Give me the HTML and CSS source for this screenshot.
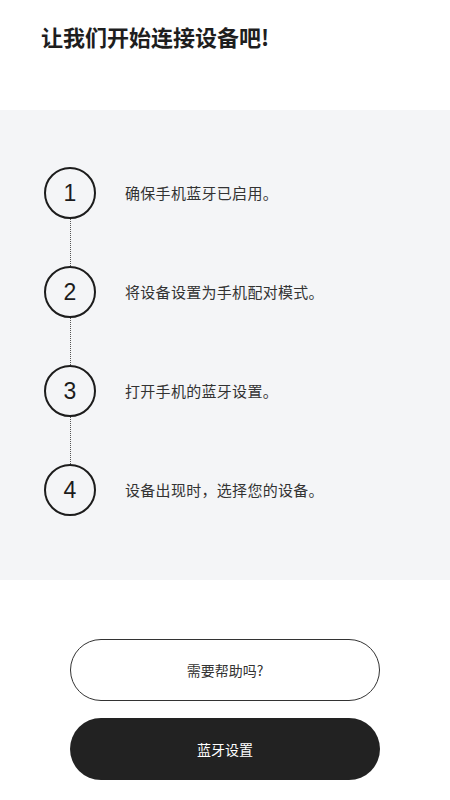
FILE: index.html
```html
<!DOCTYPE html>
<html lang="zh">
<head>
<meta charset="utf-8">
<link rel="stylesheet" href="styles.css">
</head>
<body>
<header class="header">
  <h1 class="title">让我们开始连接设备吧!</h1>
</header>
<section class="panel">
  <div class="step">
    <div class="num">1</div>
    <div class="text">确保手机蓝牙已启用。</div>
    <div class="line"></div>
  </div>
  <div class="step">
    <div class="num">2</div>
    <div class="text">将设备设置为手机配对模式。</div>
    <div class="line"></div>
  </div>
  <div class="step">
    <div class="num">3</div>
    <div class="text">打开手机的蓝牙设置。</div>
    <div class="line"></div>
  </div>
  <div class="step">
    <div class="num">4</div>
    <div class="text">设备出现时，选择您的设备。</div>
  </div>
</section>
<div class="actions">
  <button class="btn btn-outline">需要帮助吗?</button>
  <button class="btn btn-solid">蓝牙设置</button>
</div>
</body>
</html>
```
FILE: styles.css
```css
html, body {
  margin: 0;
  padding: 0;
  background: #ffffff;
  font-family: "Noto Sans CJK SC", "Noto Sans", sans-serif;
  color: #222;
}
.header {
  height: 110px;
  padding: 21px 0 0 41px;
  box-sizing: border-box;
}
.title {
  margin: 0;
  font-size: 22px;
  line-height: 30px;
  font-weight: 600;
  color: #1e1e1e;
}
.panel {
  background: #f4f5f7;
  height: 470px;
  box-sizing: border-box;
  padding: 57px 0 0 44px;
  display: flex;
  flex-direction: column;
}
.step {
  display: grid;
  grid-template-columns: 52px 1fr;
  column-gap: 29px;
  align-items: center;
}
.num {
  width: 52px;
  height: 52px;
  box-sizing: border-box;
  border: 2px solid #1c1c1c;
  border-radius: 50%;
  display: flex;
  align-items: center;
  justify-content: center;
  font-family: "Liberation Sans", Arial, sans-serif;
  font-size: 23px;
  color: #1c1c1c;
}
.text {
  font-size: 15px;
  color: #333;
  line-height: 20px;
  letter-spacing: 0.3px;
}
.line {
  grid-column: 1;
  justify-self: center;
  width: 0;
  height: 47px;
  border-left: 1px dotted #555;
}
.actions {
  padding: 59px 0 0 70px;
  display: flex;
  flex-direction: column;
  gap: 17px;
}
.btn {
  width: 310px;
  height: 62px;
  border-radius: 31px;
  font-family: "Noto Sans CJK SC", "Noto Sans", sans-serif;
  font-size: 14px;
  box-sizing: border-box;
  cursor: pointer;
}
.btn-outline {
  background: #fff;
  border: 1.5px solid #333;
  color: #333;
}
.btn-solid {
  background: #222;
  border: none;
  color: #fff;
}
```
